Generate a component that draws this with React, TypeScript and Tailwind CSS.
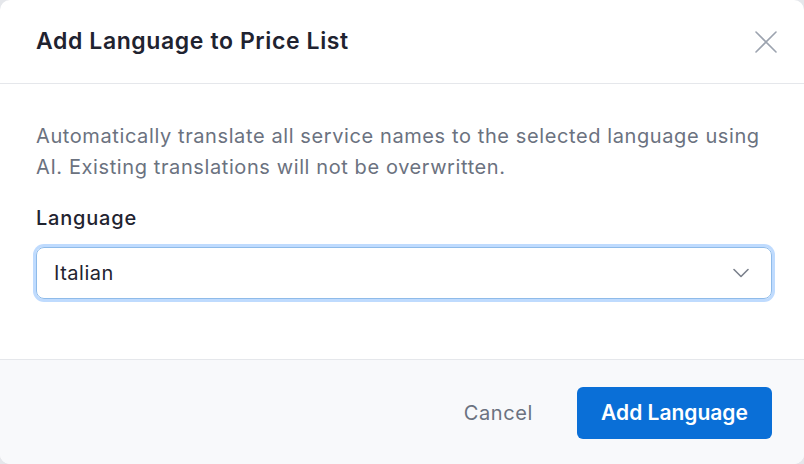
import React from "react";

export default function App() {
  return (
    <div className="w-[804px] h-[464px] bg-[#e5e7eb] overflow-hidden" style={{ fontFamily: "Inter, 'Liberation Sans', sans-serif" }}>
      <div className="w-full h-full bg-white rounded-[10px] flex flex-col overflow-hidden">
        <div className="h-[84px] shrink-0 border-b border-[#e5e7eb] flex items-center justify-between pl-[36px] pr-[24px]">
          <h2 className="text-[23px] leading-[30px] font-semibold text-[#1f2330] tracking-[0.6px] -mt-[2px]">Add Language to Price List</h2>
          <button className="w-[28px] h-[28px] flex items-center justify-center text-[#9ca3af]">
            <svg width="24" height="24" viewBox="0 0 24 24" fill="none" stroke="currentColor" strokeWidth="1.6" strokeLinecap="round">
              <path d="M2 2L22 22M22 2L2 22" />
            </svg>
          </button>
        </div>
        <div className="flex-1 pl-[36px] pr-[32px] pt-[37px]">
          <p className="text-[20px] leading-[31px] text-[#6b7280] tracking-[0.6px]">
            Automatically translate all service names to the selected language using AI. Existing translations will not be overwritten.
          </p>
          <label className="block mt-[21px] text-[20px] leading-[28px] font-medium text-[#1f2330] tracking-[0.8px]">Language</label>
          <div className="mt-[15px] rounded-[8px] ring-[3px] ring-[#bfdbfe] border border-[#8fbbe9] h-[52px] flex items-center justify-between pl-[17px] pr-[22px]">
            <span className="text-[20px] text-[#1f2330] tracking-[0.5px]">Italian</span>
            <svg width="16" height="10" viewBox="0 0 16 10" fill="none" stroke="#7b818c" strokeWidth="1.6" strokeLinecap="round" strokeLinejoin="round">
              <path d="M1 1.5L8 8.5L15 1.5" />
            </svg>
          </div>
        </div>
        <div className="h-[105px] shrink-0 border-t border-[#e5e7eb] bg-[#f8f9fb] flex items-center justify-end gap-[44px] pr-[32px] pt-[2px]">
          <button className="text-[20px] text-[#6b7280] tracking-[0.6px]">Cancel</button>
          <button className="h-[52px] w-[195px] rounded-[6px] bg-[#0a6fd7] text-white text-[21px] font-semibold">Add Language</button>
        </div>
      </div>
    </div>
  );
}
